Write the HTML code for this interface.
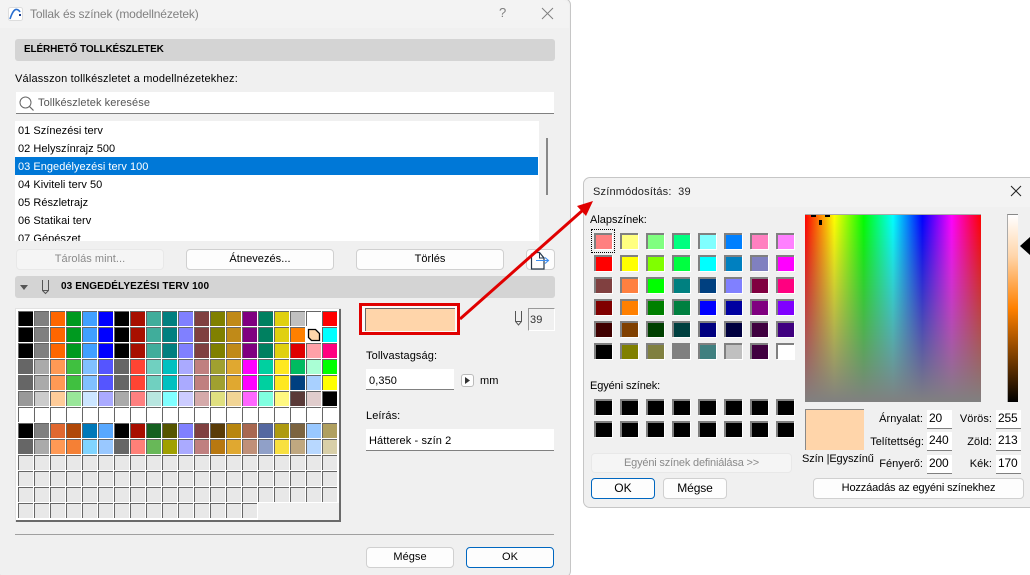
<!DOCTYPE html>
<html><head><meta charset="utf-8"><style>
html,body{margin:0;padding:0;width:1030px;height:575px;overflow:hidden;background:#fff}
body{position:relative;font-family:"Liberation Sans",sans-serif;font-size:11px;color:#000}
div,span,svg{position:absolute;box-sizing:border-box}
.t{white-space:nowrap;line-height:14px;letter-spacing:.1px}
.l{letter-spacing:.03px}
.b{font-weight:bold;font-size:10px;letter-spacing:-.13px}
.hd{background:#d4d4d4;border-radius:3px}
.in{background:#fff;border-bottom:1px solid #808080}
.btn{background:#fdfdfd;border:1px solid #d0d0d0;border-radius:4px;text-align:center;line-height:19px;letter-spacing:.05px;white-space:nowrap}
.dis{background:#f5f5f5;border-color:#e8e8e8;color:#8a8a8a}
.ok{border:1px solid #0067c0}
#g{left:16px;top:309px;width:323px;height:211px;background:#fff;display:grid;grid-template-columns:repeat(20,15px);grid-auto-rows:15px;gap:1px;padding:2px 0 0 2px}
#g i{display:block;border-top:1px solid #666;border-left:1px solid #666;position:relative}
.c{display:grid;grid-template-columns:repeat(8,18px);column-gap:8px;row-gap:6px;grid-auto-rows:16px}
.c i{display:block;border-top:2px solid #808080;border-left:2px solid #808080;box-shadow:1px 1px 0 #fff}
.d{font-size:11px;letter-spacing:.05px}
.f{background:#fff;border-bottom:1px solid #808080;font-size:12px;line-height:17px;padding-left:2px;letter-spacing:-.2px}
</style></head><body>

<!-- main dialog -->
<div style="left:-2px;top:-2px;width:573px;height:580px;background:#f0f0f0;border:1px solid #c6c6c6;border-radius:7px"></div>
<div style="left:0;top:0;width:569px;height:28px;background:#f3f3f3;border-top-right-radius:7px"></div>
<svg style="left:8px;top:7px" width="16" height="14" viewBox="0 0 16 14"><rect x=".5" y=".5" width="14" height="13" rx="2" fill="#fff" stroke="#ddd"/><path d="M2 12C4 6 6 2 9 2.500C11 3 11.500 4 12 5" fill="none" stroke="#2a6fd0" stroke-width="1.600"/><rect x="11" y="7" width="2" height="2" fill="#1a3f90"/></svg>
<div class="t" style="left:30px;top:7px;color:#808080;font-size:12px;letter-spacing:-.15px">Tollak és színek (modellnézetek)</div>
<div class="t" style="left:499px;top:6px;color:#808080;font-size:13px">?</div>
<svg style="left:541px;top:7px" width="13" height="13"><path d="M1 1L12 12M12 1L1 12" stroke="#808080" fill="none"/></svg>

<div class="hd" style="left:15px;top:39px;width:540px;height:22px"></div>
<div class="t b" style="left:24px;top:43px">ELÉRHETŐ TOLLKÉSZLETEK</div>
<div class="t" style="left:15px;top:72px;letter-spacing:.18px">Válasszon tollkészletet a modellnézetekhez:</div>
<div class="in" style="left:16px;top:92px;width:538px;height:22px"></div>
<svg style="left:19px;top:96px" width="16" height="15"><circle cx="6.500" cy="6.500" r="5.500" fill="none" stroke="#666"/><path d="M10.500 10.500L14.500 14.500" stroke="#666" stroke-width="1.200"/></svg>
<div class="t" style="left:38px;top:96px;color:#555;letter-spacing:.09px">Tollkészletek keresése</div>

<div style="left:15px;top:121px;width:524px;height:120px;background:#fff;overflow:hidden">
<div style="left:0;top:36px;width:523px;height:18px;background:#0078d7"></div>
<div class="t l" style="left:3px;top:3px">01 Színezési terv</div>
<div class="t l" style="left:3px;top:21px">02 Helyszínrajz 500</div>
<div class="t l" style="left:3px;top:39px;color:#fff">03 Engedélyezési terv 100</div>
<div class="t l" style="left:3px;top:57px">04 Kiviteli terv 50</div>
<div class="t l" style="left:3px;top:75px">05 Részletrajz</div>
<div class="t l" style="left:3px;top:93px">06 Statikai terv</div>
<div class="t l" style="left:3px;top:111px">07 Gépészet</div>
</div>
<div style="left:546px;top:138px;width:2px;height:57px;background:#888"></div>

<div class="btn dis" style="left:16px;top:249px;width:148px;height:21px">Tárolás mint...</div>
<div class="btn" style="left:186px;top:249px;width:148px;height:21px">Átnevezés...</div>
<div class="btn" style="left:356px;top:249px;width:148px;height:21px">Törlés</div>
<div class="btn" style="left:526px;top:249px;width:29px;height:21px"></div>
<svg style="left:530px;top:250px" width="26" height="20"><path d="M1.500 3.500V19H14V8L9.500 2.500H4" fill="none" stroke="#24364a" stroke-width="1.200"/><path d="M9.500 2.500V8H14" fill="none" stroke="#24364a"/><path d="M6 10.500H18M15 7.500L18.500 10.500L15 13.500" fill="none" stroke="#3a8cf0" stroke-width="1.100"/></svg>

<div class="hd" style="left:15px;top:276px;width:540px;height:22px"></div>
<svg style="left:20px;top:285px" width="10" height="6"><path d="M0 0H8L4 5Z" fill="#555"/></svg>
<svg style="left:41px;top:279px" width="10" height="17"><path d="M1.500 1V11.500L4.500 14.500L7.500 11.500V1M1.500 11.500H7.500" fill="none" stroke="#555"/></svg>
<div class="t b" style="left:61px;top:280px;letter-spacing:.1px">03 ENGEDÉLYEZÉSI TERV 100</div>

<div style="left:15px;top:308px;width:326px;height:214px;background:#6a6a6a;border-top:1px solid #e2e2e2;border-left:1px solid #e2e2e2"></div>
<div id="g">
<i style=background:#000></i><i style=background:#808080></i><i style=background:#f60></i><i style=background:#009a20></i><i style=background:#3fa0ff></i><i style=background:#00f></i><i style=background:#000></i><i style=background:#a80f00></i><i style=background:#40ad9b></i><i style=background:#008080></i><i style=background:#8080ff></i><i style=background:#804040></i><i style=background:#808000></i><i style=background:#c08a18></i><i style=background:#800080></i><i style=background:#008060></i><i style=background:#e0d010></i><i style=background:#c0c0c0></i><i style=background:#fff></i><i style=background:#f00></i>
<i style=background:#000></i><i style=background:#808080></i><i style=background:#f60></i><i style=background:#009a20></i><i style=background:#3fa0ff></i><i style=background:#00f></i><i style=background:#000></i><i style=background:#a80f00></i><i style=background:#40ad9b></i><i style=background:#008080></i><i style=background:#8080ff></i><i style=background:#804040></i><i style=background:#808000></i><i style=background:#c08a18></i><i style=background:#800080></i><i style=background:#008060></i><i style=background:#e0d010></i><i style=background:#ff8000></i><i style="background:#fff;border-color:#fff"><svg style="left:0;top:0" width="14" height="14"><path d="M1.500 1.500H8.500L12.500 5.500V12.500H4.500L1.500 9.500Z" fill="#ffd5aa" stroke="#000" stroke-width="1.300"/></svg></i><i style=background:#0ff></i>
<i style=background:#000></i><i style=background:#808080></i><i style=background:#f60></i><i style=background:#009a20></i><i style=background:#3fa0ff></i><i style=background:#00f></i><i style=background:#000></i><i style=background:#a80f00></i><i style=background:#40ad9b></i><i style=background:#008080></i><i style=background:#8080ff></i><i style=background:#804040></i><i style=background:#808000></i><i style=background:#c08a18></i><i style=background:#800080></i><i style=background:#008060></i><i style=background:#e0d010></i><i style=background:#e00000></i><i style=background:#ffa0a8></i><i style=background:#ff0080></i>
<i style=background:#666></i><i style=background:#aaa></i><i style=background:#f95></i><i style=background:#40c040></i><i style=background:#80c0ff></i><i style=background:#55f></i><i style=background:#666></i><i style=background:#f43></i><i style=background:#70d0c0></i><i style=background:#00c0c0></i><i style=background:#aaf></i><i style=background:#c08080></i><i style=background:#a0a030></i><i style=background:#e0a830></i><i style=background:#f0f></i><i style=background:#00d0a0></i><i style=background:#ffe820></i><i style=background:#00bb60></i><i style=background:#aaffd5></i><i style=background:#0f0></i>
<i style=background:#666></i><i style=background:#aaa></i><i style=background:#f95></i><i style=background:#40c040></i><i style=background:#80c0ff></i><i style=background:#55f></i><i style=background:#666></i><i style=background:#f43></i><i style=background:#70d0c0></i><i style=background:#00c0c0></i><i style=background:#aaf></i><i style=background:#c08080></i><i style=background:#a0a030></i><i style=background:#e0a830></i><i style=background:#f0f></i><i style=background:#00d0a0></i><i style=background:#ffe820></i><i style=background:#004080></i><i style=background:#a8d0ff></i><i style=background:#ff0></i>
<i style=background:#999></i><i style=background:#ccc></i><i style=background:#fc9></i><i style=background:#99e699></i><i style=background:#cce6ff></i><i style=background:#aaf></i><i style=background:#aaa></i><i style=background:#ff8080></i><i style=background:#b8e6e0></i><i style=background:#80ffff></i><i style=background:#ccf></i><i style=background:#d5aaaa></i><i style=background:#e0e080></i><i style=background:#f2d595></i><i style=background:#f6f></i><i style=background:#80ffe0></i><i style=background:#fff880></i><i style=background:#5a3a38></i><i style=background:#e0cccc></i><i style=background:#000></i>
<i style=background:#fff></i><i style=background:#fff></i><i style=background:#fff></i><i style=background:#fff></i><i style=background:#fff></i><i style=background:#fff></i><i style=background:#fff></i><i style=background:#fff></i><i style=background:#fff></i><i style=background:#fff></i><i style=background:#fff></i><i style=background:#fff></i><i style=background:#fff></i><i style=background:#fff></i><i style=background:#fff></i><i style=background:#fff></i><i style=background:#fff></i><i style=background:#fff></i><i style=background:#fff></i><i style=background:#fff></i>
<i style=background:#000></i><i style=background:#808080></i><i style=background:#e06830></i><i style=background:#b04808></i><i style=background:#0078b8></i><i style=background:#58a8ff></i><i style=background:#000></i><i style=background:#a80f00></i><i style=background:#156020></i><i style=background:#550></i><i style=background:#8080ff></i><i style=background:#804040></i><i style=background:#5a3c08></i><i style=background:#b8860f></i><i style=background:#a86850></i><i style=background:#5568a0></i><i style=background:#ae9a10></i><i style=background:#7c6440></i><i style=background:#99c8ff></i><i style=background:#b0a060></i>
<i style=background:#666></i><i style=background:#aaa></i><i style=background:#f95></i><i style=background:#f58035></i><i style=background:#80d4ff></i><i style=background:#99c8ff></i><i style=background:#666></i><i style=background:#ff8078></i><i style=background:#68b858></i><i style=background:#a0a000></i><i style=background:#aaf></i><i style=background:#c08080></i><i style=background:#b87810></i><i style=background:#e0a830></i><i style=background:#c09078></i><i style=background:#90a0c8></i><i style=background:#f8e040></i><i style=background:#c0a880></i><i style=background:#b8d8ff></i><i style=background:#d8cfa8></i>
<i style=background:#e8e8e8></i><i style=background:#e8e8e8></i><i style=background:#e8e8e8></i><i style=background:#e8e8e8></i><i style=background:#e8e8e8></i><i style=background:#e8e8e8></i><i style=background:#e8e8e8></i><i style=background:#e8e8e8></i><i style=background:#e8e8e8></i><i style=background:#e8e8e8></i><i style=background:#e8e8e8></i><i style=background:#e8e8e8></i><i style=background:#e8e8e8></i><i style=background:#e8e8e8></i><i style=background:#e8e8e8></i><i style=background:#e8e8e8></i><i style=background:#e8e8e8></i><i style=background:#e8e8e8></i><i style=background:#e8e8e8></i><i style=background:#e8e8e8></i>
<i style=background:#e8e8e8></i><i style=background:#e8e8e8></i><i style=background:#e8e8e8></i><i style=background:#e8e8e8></i><i style=background:#e8e8e8></i><i style=background:#e8e8e8></i><i style=background:#e8e8e8></i><i style=background:#e8e8e8></i><i style=background:#e8e8e8></i><i style=background:#e8e8e8></i><i style=background:#e8e8e8></i><i style=background:#e8e8e8></i><i style=background:#e8e8e8></i><i style=background:#e8e8e8></i><i style=background:#e8e8e8></i><i style=background:#e8e8e8></i><i style=background:#e8e8e8></i><i style=background:#e8e8e8></i><i style=background:#e8e8e8></i><i style=background:#e8e8e8></i>
<i style=background:#e8e8e8></i><i style=background:#e8e8e8></i><i style=background:#e8e8e8></i><i style=background:#e8e8e8></i><i style=background:#e8e8e8></i><i style=background:#e8e8e8></i><i style=background:#e8e8e8></i><i style=background:#e8e8e8></i><i style=background:#e8e8e8></i><i style=background:#e8e8e8></i><i style=background:#e8e8e8></i><i style=background:#e8e8e8></i><i style=background:#e8e8e8></i><i style=background:#e8e8e8></i><i style=background:#e8e8e8></i><i style=background:#e8e8e8></i><i style=background:#e8e8e8></i><i style=background:#e8e8e8></i><i style=background:#e8e8e8></i><i style=background:#e8e8e8></i>
<i style=background:#e8e8e8></i><i style=background:#e8e8e8></i><i style=background:#e8e8e8></i><i style=background:#e8e8e8></i><i style=background:#e8e8e8></i><i style=background:#e8e8e8></i><i style=background:#e8e8e8></i><i style=background:#e8e8e8></i><i style=background:#e8e8e8></i><i style=background:#e8e8e8></i><i style=background:#e8e8e8></i><i style=background:#e8e8e8></i><i style=background:#e8e8e8></i><i style=background:#e8e8e8></i><i style=background:#e8e8e8></i>
</div>
<div style="left:258px;top:503px;width:81px;height:17px;background:#f0f0f0"></div>

<div style="left:359px;top:303px;width:101px;height:32px;border:3px solid #e00000;background:#fafafa"></div>
<div style="left:365px;top:308px;width:90px;height:23px;background:#ffd5aa;border-top:1px solid #666;border-left:1px solid #666"></div>
<svg style="left:514px;top:310px" width="10" height="17"><path d="M1.500 1V11.500L4.500 15L7.500 11.500V1M1.500 11.500H7.500" fill="none" stroke="#555"/></svg>
<div style="left:528px;top:308px;width:27px;height:23px;border:1px solid #fff;border-top-color:#999;border-left-color:#999"></div>
<div class="t" style="left:530px;top:313px;color:#333">39</div>

<div class="t" style="left:366px;top:349px">Tollvastagság:</div>
<div class="in" style="left:366px;top:369px;width:88px;height:21px"></div>
<div class="t" style="left:369px;top:374px">0,350</div>
<div class="btn" style="left:461px;top:374px;width:13px;height:13px;border-color:#bbb;border-radius:3px"></div>
<svg style="left:465px;top:377px" width="6" height="8"><path d="M0 0L5 3.500L0 7Z" fill="#333"/></svg>
<div class="t" style="left:480px;top:374px">mm</div>
<div class="t" style="left:366px;top:409px">Leírás:</div>
<div class="in" style="left:366px;top:429px;width:188px;height:22px"></div>
<div class="t" style="left:369px;top:434px">Hátterek - szín 2</div>
<div style="left:15px;top:534px;width:539px;height:1px;background:#a0a0a0"></div>
<div class="btn" style="left:366px;top:547px;width:88px;height:21px">Mégse</div>
<div class="btn ok" style="left:466px;top:547px;width:88px;height:21px">OK</div>

<!-- colour dialog -->
<div style="left:583px;top:177px;width:460px;height:331px;background:#f0f0f0;border:1px solid #c6c6c6;border-radius:7px"></div>
<div style="left:584px;top:178px;width:446px;height:29px;background:#f3f3f3;border-top-left-radius:7px"></div>
<div class="t d" style="left:593px;top:185px;color:#222;letter-spacing:.2px">Színmódosítás:&nbsp; 39</div>
<svg style="left:1010px;top:185px" width="12" height="12"><path d="M1 1L11 11M11 1L1 11" stroke="#222" fill="none"/></svg>
<div class="t" style="left:590px;top:213px;letter-spacing:0">Alapszínek:</div>
<div style="left:591px;top:229px;width:24px;height:24px;border:1px dotted #000"></div>
<div class="c" style="left:594px;top:233px">
<i style=background:#ff8080></i><i style=background:#ffff80></i><i style=background:#80ff80></i><i style=background:#00ff80></i><i style=background:#80ffff></i><i style=background:#0080ff></i><i style=background:#ff80c0></i><i style=background:#ff80ff></i>
<i style=background:#f00></i><i style=background:#ff0></i><i style=background:#80ff00></i><i style=background:#00ff40></i><i style=background:#0ff></i><i style=background:#0080c0></i><i style=background:#8080c0></i><i style=background:#f0f></i>
<i style=background:#804040></i><i style=background:#ff8040></i><i style=background:#0f0></i><i style=background:#008080></i><i style=background:#004080></i><i style=background:#8080ff></i><i style=background:#800040></i><i style=background:#ff0080></i>
<i style=background:#800000></i><i style=background:#ff8000></i><i style=background:#008000></i><i style=background:#008040></i><i style=background:#00f></i><i style=background:#0000a0></i><i style=background:#800080></i><i style=background:#8000ff></i>
<i style=background:#400000></i><i style=background:#804000></i><i style=background:#004000></i><i style=background:#004040></i><i style=background:#000080></i><i style=background:#000040></i><i style=background:#400040></i><i style=background:#400080></i>
<i style=background:#000></i><i style=background:#808000></i><i style=background:#808040></i><i style=background:#808080></i><i style=background:#408080></i><i style=background:#c0c0c0></i><i style=background:#400040></i><i style=background:#fff></i>
</div>
<div class="t" style="left:590px;top:379px;letter-spacing:-.1px">Egyéni színek:</div>
<div class="c" style="left:594px;top:399px">
<i style=background:#000></i><i style=background:#000></i><i style=background:#000></i><i style=background:#000></i><i style=background:#000></i><i style=background:#000></i><i style=background:#000></i><i style=background:#000></i>
<i style=background:#000></i><i style=background:#000></i><i style=background:#000></i><i style=background:#000></i><i style=background:#000></i><i style=background:#000></i><i style=background:#000></i><i style=background:#000></i>
</div>
<div class="btn dis" style="left:591px;top:453px;width:201px;height:20px;letter-spacing:-.18px">Egyéni színek definiálása &gt;&gt;</div>
<div class="btn ok" style="left:591px;top:478px;width:64px;height:21px;font-size:12px">OK</div>
<div class="btn" style="left:663px;top:478px;width:64px;height:21px;font-size:12px;letter-spacing:-.1px">Mégse</div>

<div style="left:805px;top:214px;width:176px;height:188px;border-top:1px solid #aaa;background:linear-gradient(to bottom,rgba(128,128,128,0),#808080),linear-gradient(to right,#f00,#ff0 16.670%,#0f0 33.330%,#0ff 50%,#00f 66.670%,#f0f 83.330%,#f00)"></div>
<div style="left:811px;top:215px;width:5px;height:2px;background:#000"></div>
<div style="left:825px;top:215px;width:5px;height:2px;background:#000"></div>
<div style="left:819px;top:220px;width:3px;height:5px;background:#000"></div>
<div style="left:1007px;top:214px;width:11px;height:188px;border-top:1px solid #888;border-left:1px solid #aaa;background:linear-gradient(to bottom,#fff,#ffd5aa 22%,#ff8000 50%,#000)"></div>
<svg style="left:1020px;top:237px" width="10" height="18"><path d="M0 9L10 0V18Z" fill="#000"/></svg>

<div style="left:805px;top:409px;width:59px;height:41px;background:#ffd5aa;border-top:1px solid #888;border-left:1px solid #888"></div>
<div class="t d" style="left:802px;top:452px;letter-spacing:-.1px">Szín |Egyszínű</div>
<div class="t d" style="right:107px;top:412px">Árnyalat:</div>
<div class="t d" style="right:106px;top:435px">Telítettség:</div>
<div class="t d" style="right:107px;top:457px">Fényerő:</div>
<div class="t d" style="right:38px;top:412px">Vörös:</div>
<div class="t d" style="right:38px;top:435px">Zöld:</div>
<div class="t d" style="right:38px;top:457px">Kék:</div>
<div class="f" style="left:927px;top:410px;width:25px;height:19px">20</div>
<div class="f" style="left:927px;top:432px;width:25px;height:19px">240</div>
<div class="f" style="left:927px;top:455px;width:25px;height:19px">200</div>
<div class="f" style="left:996px;top:410px;width:25px;height:19px">255</div>
<div class="f" style="left:996px;top:432px;width:25px;height:19px">213</div>
<div class="f" style="left:996px;top:455px;width:25px;height:19px">170</div>
<div class="btn" style="left:813px;top:478px;width:211px;height:21px;letter-spacing:-.14px">Hozzáadás az egyéni színekhez</div>

<!-- red arrow -->
<svg style="left:0;top:0" width="1030" height="575"><path d="M460 319L583 210" stroke="#e00000" stroke-width="3" fill="none"/><path d="M593 201L586 216L577 206Z" fill="#e00000"/></svg>
</body></html>
